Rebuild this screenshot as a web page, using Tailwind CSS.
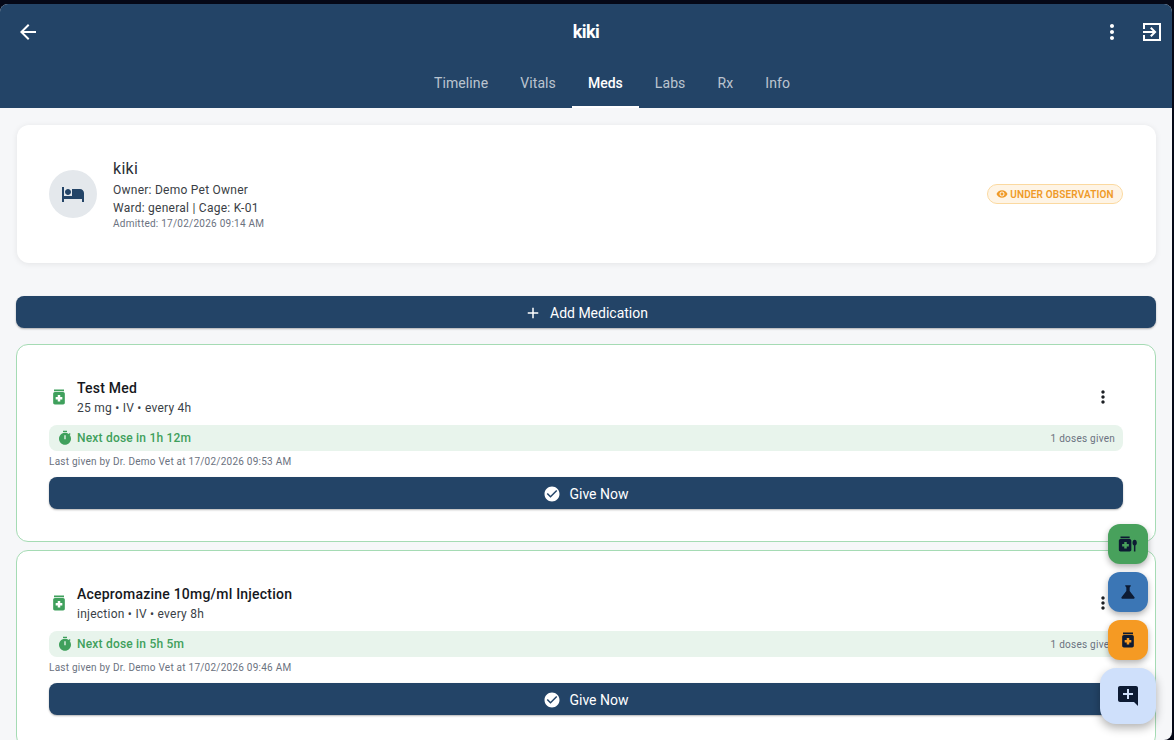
<!DOCTYPE html>
<html lang="en">
<head>
  <meta charset="UTF-8" />
  <meta name="viewport" content="width=device-width, initial-scale=1" />
  <title>kiki</title>
  <script src="https://cdn.jsdelivr.net/npm/@tailwindcss/browser@4"></script>
</head>
<body class="bg-[#050816] h-[740px] overflow-hidden font-['Roboto',sans-serif]">
<div class="relative mt-1 w-[1172px] h-[736px] bg-[#f6f7f9] rounded-t-lg rounded-br-lg overflow-hidden">

  <!-- App bar -->
  <header class="bg-[#234467] h-[104px] text-white">
    <div class="h-14 flex items-center px-2">
      <div class="flex-1">
        <svg class="ml-2 w-6 h-6" viewBox="0 0 24 24" fill="currentColor"><path d="M20 11H7.83l5.59-5.59L12 4l-8 8 8 8 1.41-1.41L7.83 13H20v-2z"/></svg>
      </div>
      <h1 class="text-lg font-bold tracking-[-0.5px]">kiki</h1>
      <div class="flex-1 flex items-center justify-end gap-4">
        <svg class="w-6 h-6" viewBox="0 0 24 24" fill="currentColor"><path d="M12 8c1.1 0 2-.9 2-2s-.9-2-2-2-2 .9-2 2 .9 2 2 2zm0 2c-1.1 0-2 .9-2 2s.9 2 2 2 2-.9 2-2-.9-2-2-2zm0 6c-1.1 0-2 .9-2 2s.9 2 2 2 2-.9 2-2-.9-2-2-2z"/></svg>
        <svg class="w-6 h-6" viewBox="0 0 24 24" fill="currentColor"><path d="M10.09 15.59 11.5 17l5-5-5-5-1.41 1.41L12.67 11H3v2h9.67zM21 3H3v6h2V5h14v14H5v-4H3v6h18z"/></svg>
      </div>
    </div>
    <nav class="h-12 pl-[52px] flex justify-center text-sm font-[450] tracking-[0.1px] text-white/70">
      <a class="px-4 flex items-center border-b-2 border-transparent">Timeline</a>
      <a class="px-4 flex items-center border-b-2 border-transparent">Vitals</a>
      <a class="px-4 flex items-center text-white font-medium tracking-normal border-b-2 border-white">Meds</a>
      <a class="px-4 flex items-center border-b-2 border-transparent">Labs</a>
      <a class="px-4 flex items-center border-b-2 border-transparent">Rx</a>
      <a class="px-4 flex items-center border-b-2 border-transparent">Info</a>
    </nav>
  </header>

  <main class="px-4 pt-[17px]">
    <!-- Patient card -->
    <section class="ml-px h-[138px] bg-white rounded-xl shadow-[0_1px_6px_rgba(0,0,0,0.08)] p-8 flex items-center gap-4">
      <div class="w-12 h-12 rounded-full bg-[#e4e8ec] flex items-center justify-center text-[#234467]">
        <svg class="w-6 h-6" viewBox="0 0 24 24" fill="currentColor"><path d="M7 13c1.66 0 3-1.34 3-3S8.66 7 7 7s-3 1.34-3 3 1.34 3 3 3zm12-6h-8v7H3V5H1v15h2v-3h18v3h2v-9c0-2.21-1.79-4-4-4z"/></svg>
      </div>
      <div class="flex-1 text-[#3a3e45]">
        <div class="text-base leading-6 tracking-[0.3px] text-[#2b2f36]">kiki</div>
        <div class="text-xs leading-[19px] tracking-[0.25px]">Owner: Demo Pet Owner</div>
        <div class="text-xs leading-[17px] tracking-[0.25px]">Ward: general | Cage: K-01</div>
        <div class="text-[10px] leading-[14px] tracking-[0.25px] text-[#6b7280]">Admitted: 17/02/2026 09:14 AM</div>
      </div>
      <div class="mr-px h-5 w-[136px] rounded-full border border-[#fbd9a0] bg-[#fef4e5] flex items-center justify-center gap-[2px] text-[10px] font-semibold tracking-[0.15px] text-[#ef9a28]">
        <svg class="w-3 h-3" viewBox="0 0 24 24" fill="currentColor"><path d="M12 4.5C7 4.5 2.73 7.61 1 12c1.73 4.39 6 7.5 11 7.5s9.27-3.11 11-7.5c-1.73-4.39-6-7.5-11-7.5zM12 17c-2.76 0-5-2.24-5-5s2.24-5 5-5 5 2.24 5 5-2.24 5-5 5zm0-8c-1.66 0-3 1.34-3 3s1.34 3 3 3 3-1.34 3-3-1.34-3-3-3z"/></svg>
        UNDER OBSERVATION
      </div>
    </section>

    <button class="mt-[33px] pt-[2px] w-full h-8 rounded-lg bg-[#234467] text-white text-sm font-[450] shadow-[0_1px_2px_rgba(0,0,0,0.3)] flex items-center justify-center gap-2">
      <svg class="w-[18px] h-[18px]" viewBox="0 0 24 24" fill="currentColor"><path d="M19 13h-6v6h-2v-6H5v-2h6V5h2v6h6v2z"/></svg>
      Add Medication
    </button>

    <!-- Med cards -->
    <section class="mt-4 h-[198px] bg-white rounded-xl border border-[#a5dbb4] p-8">
      <div class="h-10 flex items-center gap-2">
        <svg class="w-5 h-5 text-[#3fa05c]" viewBox="0 0 24 24" fill="currentColor"><path d="M6 3h12v2H6zm11 3H7c-1.1 0-2 .9-2 2v11c0 1.1.9 2 2 2h10c1.1 0 2-.9 2-2V8c0-1.1-.9-2-2-2zm-1 9h-2.5v2.5h-3V15H8v-3h2.5V9.5h3V12H16v3z"/></svg>
        <div class="flex-1 pt-[2px]">
          <div class="text-sm leading-[21px] font-[470] tracking-[0.22px] text-[#16181d]">Test Med</div>
          <div class="text-xs leading-[19px] tracking-[0.25px] text-[#3a3f47]">25 mg • IV • every 4h</div>
        </div>
        <svg class="w-5 h-5 text-[#1c1f24] mr-[10px]" viewBox="0 0 24 24" fill="currentColor"><path d="M12 8c1.1 0 2-.9 2-2s-.9-2-2-2-2 .9-2 2 .9 2 2 2zm0 2c-1.1 0-2 .9-2 2s.9 2 2 2 2-.9 2-2-.9-2-2-2zm0 6c-1.1 0-2 .9-2 2s.9 2 2 2 2-.9 2-2-.9-2-2-2z"/></svg>
      </div>
      <div class="mt-2 h-[26px] rounded-lg bg-[#e8f4ec] flex items-center gap-1 px-2">
        <svg class="w-4 h-4 text-[#3fa05c]" viewBox="0 0 24 24" fill="currentColor"><path d="M9 1h6v2H9zm10.03 6.39 1.42-1.42c-.43-.51-.9-.99-1.41-1.41l-1.42 1.42C16.07 4.74 14.12 4 12 4c-4.97 0-9 4.03-9 9s4.02 9 9 9 9-4.03 9-9c0-2.12-.74-4.07-1.97-5.61zM13 14h-2V8h2v6z"/></svg>
        <span class="flex-1 text-xs font-medium tracking-[0.2px] text-[#3fa05c]">Next dose in 1h 12m</span>
        <span class="text-[10px] tracking-[0.25px] text-[#6b7280]">1 doses given</span>
      </div>
      <div class="mt-[3px] text-[10px] leading-4 tracking-[0.24px] text-[#6b7280]">Last given by Dr. Demo Vet at 17/02/2026 09:53 AM</div>
      <button class="mt-[7px] pt-[2px] w-full h-8 rounded-lg bg-[#234467] text-white text-sm font-[450] shadow-[0_1px_2px_rgba(0,0,0,0.3)] flex items-center justify-center gap-2">
        <svg class="w-[18px] h-[18px]" viewBox="0 0 24 24" fill="currentColor"><path d="M12 2C6.48 2 2 6.48 2 12s4.48 10 10 10 10-4.48 10-10S17.52 2 12 2zm-2 15l-5-5 1.41-1.41L10 14.17l7.59-7.59L19 8l-9 9z"/></svg>
        Give Now
      </button>
    </section>

    <section class="mt-2 h-[198px] bg-white rounded-xl border border-[#a5dbb4] p-8">
      <div class="h-10 flex items-center gap-2">
        <svg class="w-5 h-5 text-[#3fa05c]" viewBox="0 0 24 24" fill="currentColor"><path d="M6 3h12v2H6zm11 3H7c-1.1 0-2 .9-2 2v11c0 1.1.9 2 2 2h10c1.1 0 2-.9 2-2V8c0-1.1-.9-2-2-2zm-1 9h-2.5v2.5h-3V15H8v-3h2.5V9.5h3V12H16v3z"/></svg>
        <div class="flex-1 pt-[2px]">
          <div class="text-sm leading-[21px] font-[470] tracking-[0.22px] text-[#16181d]">Acepromazine 10mg/ml Injection</div>
          <div class="text-xs leading-[19px] tracking-[0.25px] text-[#3a3f47]">injection • IV • every 8h</div>
        </div>
        <svg class="w-5 h-5 text-[#1c1f24] mr-[10px]" viewBox="0 0 24 24" fill="currentColor"><path d="M12 8c1.1 0 2-.9 2-2s-.9-2-2-2-2 .9-2 2 .9 2 2 2zm0 2c-1.1 0-2 .9-2 2s.9 2 2 2 2-.9 2-2-.9-2-2-2zm0 6c-1.1 0-2 .9-2 2s.9 2 2 2 2-.9 2-2-.9-2-2-2z"/></svg>
      </div>
      <div class="mt-2 h-[26px] rounded-lg bg-[#e8f4ec] flex items-center gap-1 px-2">
        <svg class="w-4 h-4 text-[#3fa05c]" viewBox="0 0 24 24" fill="currentColor"><path d="M9 1h6v2H9zm10.03 6.39 1.42-1.42c-.43-.51-.9-.99-1.41-1.41l-1.42 1.42C16.07 4.74 14.12 4 12 4c-4.97 0-9 4.03-9 9s4.02 9 9 9 9-4.03 9-9c0-2.12-.74-4.07-1.97-5.61zM13 14h-2V8h2v6z"/></svg>
        <span class="flex-1 text-xs font-medium tracking-[0.2px] text-[#3fa05c]">Next dose in 5h 5m</span>
        <span class="text-[10px] tracking-[0.25px] text-[#6b7280]">1 doses given</span>
      </div>
      <div class="mt-[3px] text-[10px] leading-4 tracking-[0.24px] text-[#6b7280]">Last given by Dr. Demo Vet at 17/02/2026 09:46 AM</div>
      <button class="mt-[7px] pt-[2px] w-full h-8 rounded-lg bg-[#234467] text-white text-sm font-[450] shadow-[0_1px_2px_rgba(0,0,0,0.3)] flex items-center justify-center gap-2">
        <svg class="w-[18px] h-[18px]" viewBox="0 0 24 24" fill="currentColor"><path d="M12 2C6.48 2 2 6.48 2 12s4.48 10 10 10 10-4.48 10-10S17.52 2 12 2zm-2 15l-5-5 1.41-1.41L10 14.17l7.59-7.59L19 8l-9 9z"/></svg>
        Give Now
      </button>
    </section>
  </main>

  <!-- Floating action buttons -->
  <div class="absolute right-4 top-[520px] flex flex-col items-end gap-2 text-[#0d1b33]">
    <button class="mr-2 w-10 h-10 rounded-xl bg-[#48a15c] shadow-[0_3px_6px_rgba(0,0,0,0.3)] flex items-center justify-center">
      <svg class="w-5 h-5" viewBox="0 0 24 24" fill="currentColor"><path d="M3 3h11v2H3zm11 3H3c-1.1 0-2 .9-2 2v11c0 1.1.9 2 2 2h11c1.1 0 2-.9 2-2V8c0-1.1-.9-2-2-2zm-1 9h-2.5v2.5h-3V15H5v-3h2.5V9.5h3V12H13v3zM20 7c-1.5 0-2.6 1.5-2.6 3.4 0 1.5.7 2.8 1.7 3.3V21h1.8v-7.3c1-.5 1.7-1.8 1.7-3.3C22.6 8.5 21.5 7 20 7z"/></svg>
    </button>
    <button class="mr-2 w-10 h-10 rounded-xl bg-[#3b76b5] shadow-[0_3px_6px_rgba(0,0,0,0.3)] flex items-center justify-center">
      <svg class="w-5 h-5" viewBox="0 0 24 24" fill="currentColor"><path d="M19.8 18.4 14 10.67V6.5l1.35-1.69c.26-.33.03-.81-.39-.81H9.04c-.42 0-.65.48-.39.81L10 6.5v4.17L4.2 18.4c-.49.66-.02 1.6.8 1.6h14c.82 0 1.29-.94.8-1.6z"/></svg>
    </button>
    <button class="mr-2 w-10 h-10 rounded-xl bg-[#f59a23] shadow-[0_3px_6px_rgba(0,0,0,0.3)] flex items-center justify-center">
      <svg class="w-5 h-5" viewBox="0 0 24 24" fill="currentColor"><path d="M6 3h12v2H6zm11 3H7c-1.1 0-2 .9-2 2v11c0 1.1.9 2 2 2h10c1.1 0 2-.9 2-2V8c0-1.1-.9-2-2-2zm-1 9h-2.5v2.5h-3V15H8v-3h2.5V9.5h3V12H16v3z"/></svg>
    </button>
    <button class="w-14 h-14 rounded-2xl bg-[#cfe0fb] shadow-[0_4px_10px_rgba(0,0,0,0.3)] flex items-center justify-center">
      <svg class="w-6 h-6" viewBox="0 0 24 24" fill="currentColor"><path d="M22 4c0-1.1-.9-2-2-2H4c-1.1 0-2 .9-2 2v12c0 1.1.9 2 2 2h14l4 4V4zm-5 7h-4v4h-2v-4H7V9h4V5h2v4h4v2z"/></svg>
    </button>
  </div>
</div>
</body>
</html>
